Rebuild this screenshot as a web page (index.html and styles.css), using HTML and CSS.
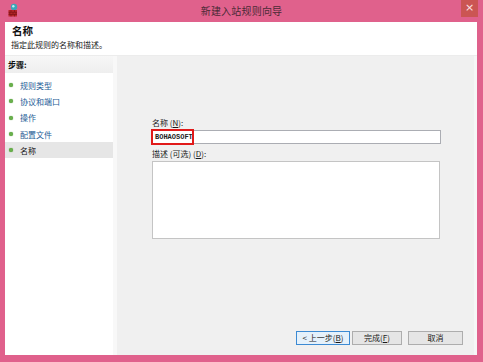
FILE: index.html
```html
<!DOCTYPE html>
<html lang="zh-CN">
<head>
<meta charset="utf-8">
<title>新建入站规则向导</title>
<link rel="stylesheet" href="styles.css">
</head>
<body>
<div class="window">
  <div class="titlebar">
    <div class="tb-left">
      <svg class="app-icon" width="10" height="14" viewBox="0 0 10 14">
        <circle cx="6" cy="4" r="3.2" fill="#3aa6b8"/>
        <circle cx="5.3" cy="3.2" r="1.2" fill="#bfeef2"/>
        <rect x="0.5" y="7" width="8.5" height="6.5" fill="#b8262a"/>
        <path d="M0.5 9.2h8.5M0.5 11.4h8.5M3 7v2.2M6.5 7v2.2M1.8 9.2v2.2M5 9.2v2.2M8 9.2v2.2M3 11.4v2.1M6.5 11.4v2.1" stroke="#6e1012" stroke-width="0.6"/>
      </svg>
    </div>
    <div class="tb-title">新建入站规则向导</div>
    <div class="tb-right"><div class="close-btn">×</div></div>
  </div>
  <div class="client">
    <div class="header">
      <div class="h-title">名称</div>
      <div class="h-sub">指定此规则的名称和描述。</div>
    </div>
    <div class="body">
      <div class="steps">
        <div class="steps-head">步骤:</div>
        <ul class="step-list">
          <li class="step"><span class="dot"></span>规则类型</li>
          <li class="step"><span class="dot"></span>协议和端口</li>
          <li class="step"><span class="dot"></span>操作</li>
          <li class="step"><span class="dot"></span>配置文件</li>
          <li class="step current"><span class="dot"></span>名称</li>
        </ul>
      </div>
      <div class="main">
        <div class="form">
          <div class="label">名称 (<u>N</u>):</div>
          <div class="textbox">
            <span class="value">BOHAOSOFT</span>
            <span class="highlight"></span>
          </div>
          <div class="label label2">描述 (可选) (<u>D</u>):</div>
          <div class="textarea"></div>
        </div>
        <div class="buttons">
          <div class="btn btn-default">&lt; 上一步(<u>B</u>)</div>
          <div class="btn btn-finish">完成(<u>F</u>)</div>
          <div class="btn btn-cancel">取消</div>
        </div>
      </div>
    </div>
  </div>
</div>
</body>
</html>
```
FILE: styles.css
```css
* { box-sizing: border-box; }
html, body { margin: 0; padding: 0; }
body {
  width: 483px;
  height: 362px;
  overflow: hidden;
  font-family: "Noto Sans CJK SC", "Noto Sans", sans-serif;
  color: #1a1a1a;
}
.window {
  width: 483px;
  height: 362px;
  background: #e0618c;
  display: flex;
  flex-direction: column;
}
.titlebar {
  height: 22px;
  display: grid;
  grid-template-columns: 1fr auto 1fr;
  align-items: start;
}
.tb-left { padding: 3px 0 0 8px; display: flex; }
.app-icon { display: block; }
.tb-title {
  font-size: 10px;
  line-height: 12px;
  padding-top: 5px;
  color: #4a2a36;
  letter-spacing: 0.2px;
}
.tb-right { display: flex; justify-content: flex-end; }
.close-btn {
  width: 17px;
  height: 17px;
  margin-right: 5px;
  background: #cb5553;
  color: #fbe3e3;
  font-family: "DejaVu Sans", sans-serif;
  font-size: 11px;
  line-height: 16px;
  text-align: center;
}
.client {
  flex: 1;
  margin: 0 6px 7px 5px;
  background: #ffffff;
  display: flex;
  flex-direction: column;
}
.header {
  height: 33px;
  padding: 2px 0 0 6px;
  background: #ffffff;
}
.h-title {
  font-size: 10.5px;
  font-weight: bold;
  line-height: 13px;
  color: #111;
  padding-left: 1px;
}
.h-sub {
  font-size: 8px;
  line-height: 10px;
  margin-top: 3px;
  color: #222;
}
.body {
  flex: 1;
  display: flex;
  border-top: 1px solid #ececec;
}
.steps {
  width: 112px;
  background: #ffffff;
  border-right: 4px solid #f8f8f8;
  display: flex;
  flex-direction: column;
}
.steps-head {
  height: 17px;
  padding: 4px 0 0 3px;
  font-size: 8px;
  line-height: 10px;
  font-weight: bold;
  background: linear-gradient(#f7f7f7, #eeeeee);
  color: #111;
}
.step-list {
  list-style: none;
  margin: 4px 0 0 0;
  padding: 0;
}
.step {
  height: 16.3px;
  display: flex;
  align-items: center;
  font-size: 8px;
  color: #1d5c96;
  padding-left: 4px;
}
.dot {
  width: 4px;
  height: 4px;
  border-radius: 50%;
  background: #6ab04c;
  margin-right: 7px;
  box-shadow: 0 0 1px #3d8a2a;
}
.step.current {
  background: #e6e6e6;
  color: #111;
}
.main {
  flex: 1;
  background: #f0f0f0;
  display: flex;
  flex-direction: column;
  justify-content: space-between;
  padding: 61px 11px 10px 35px;
  border-right: 3px solid #f6f6f6;
}
.form { display: flex; flex-direction: column; }
.label {
  font-size: 8px;
  line-height: 11px;
  color: #1a1a1a;
}
.label u { text-decoration: underline; }
.textbox {
  position: relative;
  margin-top: 2px;
  width: 289px;
  height: 14px;
  background: #ffffff;
  border: 1px solid #abadb3;
  padding-left: 2px;
  display: flex;
  align-items: center;
}
.value {
  font-family: "Liberation Mono", monospace;
  font-size: 7px;
  font-weight: bold;
  color: #222;
}
.highlight {
  position: absolute;
  left: -2px;
  top: -2px;
  width: 43px;
  height: 16px;
  border: 2px solid #e11a1a;
}
.label2 { margin-top: 4px; }
.textarea {
  margin-top: 2px;
  width: 288px;
  height: 78px;
  background: #ffffff;
  border: 1px solid #c4c4c4;
}
.buttons {
  display: flex;
  justify-content: flex-end;
  align-items: center;
}
.btn {
  height: 14px;
  font-size: 8px;
  line-height: 12px;
  text-align: center;
  border: 1px solid #adadad;
  background: #e5e5e5;
  color: #1a1a1a;
}
.btn-default {
  width: 54px;
  background: #e5f1fb;
  border-color: #3c8ad3;
}
.btn-finish { width: 50px; margin-left: 2px; }
.btn-cancel { width: 55px; margin-left: 6px; }
```
